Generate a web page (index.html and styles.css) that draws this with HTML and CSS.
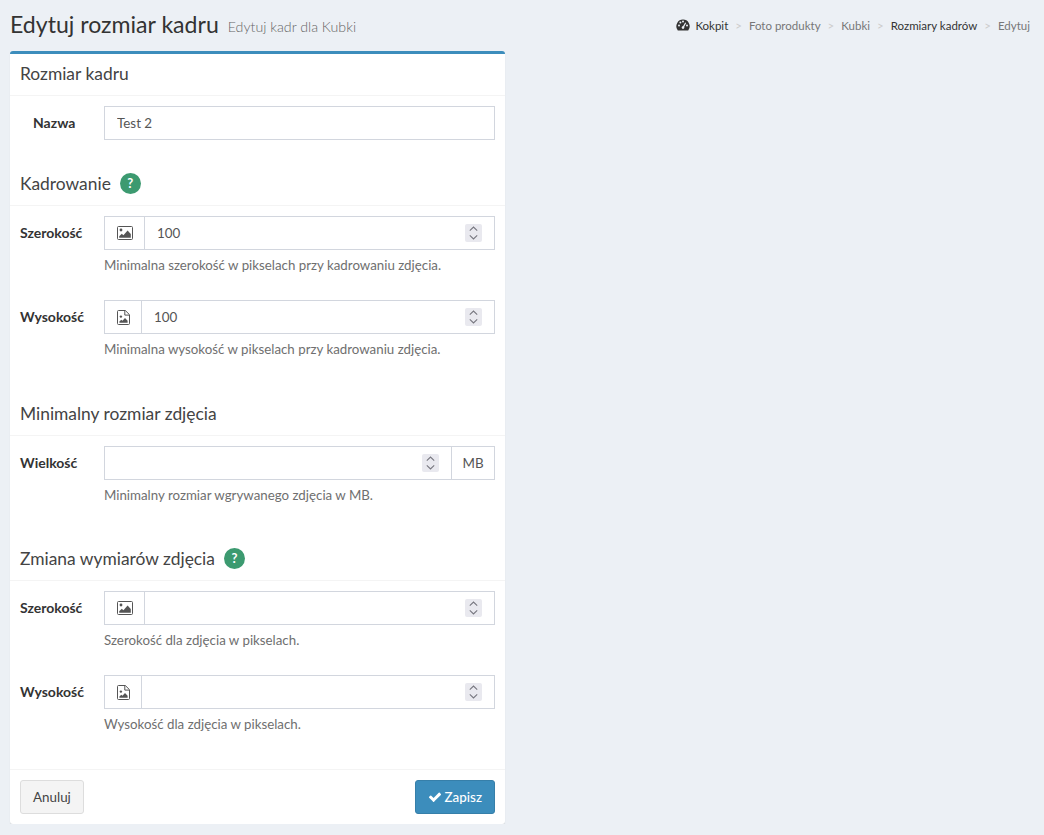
FILE: index.html
```html
<!DOCTYPE html>
<html lang="pl">
<head>
  <meta charset="UTF-8" />
  <title>Edytuj rozmiar kadru</title>
  <link rel="stylesheet" href="styles.css">
</head>
<body>
<svg class="sprites" width="0" height="0">
  <symbol id="i-picture" viewBox="0 0 16 14">
    <rect x="0.5" y="0.5" width="15" height="13" rx="1" fill="none" stroke="currentColor" stroke-width="1"/>
    <circle cx="4" cy="4" r="1.4" fill="currentColor"/>
    <path d="M2.2 11.8v-1.6l2.6-2.4 1.6 1.4 4.2-4.6 3.2 3.4v3.8z" fill="currentColor"/>
  </symbol>
  <symbol id="i-file" viewBox="0 0 13 15">
    <path d="M1.5.5h6.8l4.2 4.2v8.8a1 1 0 0 1-1 1h-10a1 1 0 0 1-1-1v-12a1 1 0 0 1 1-1z" fill="none" stroke="currentColor" stroke-width="1"/>
    <path d="M7.8.7v4.4h4.4" fill="none" stroke="currentColor" stroke-width="1"/>
    <circle cx="3.9" cy="6.6" r="1.2" fill="currentColor"/>
    <path d="M2.4 12.8v-1.4l1.9-1.7 1.2 1.1 2.5-2.7 2.6 2.7v2z" fill="currentColor"/>
  </symbol>
  <symbol id="i-spin" viewBox="0 0 17 18">
    <path d="M4.8 6.6 8.5 3l3.7 3.6M4.8 11.4 8.5 15l3.7-3.6" fill="none" stroke="currentColor" stroke-width="1.1"/>
  </symbol>
</svg>

<div class="page-head">
  <h1>Edytuj rozmiar kadru <small>Edytuj kadr dla Kubki</small></h1>
  <ol class="breadcrumb">
    <li class="dark">
      <svg class="gauge" viewBox="0 0 14 12"><path d="M7 .6a6.6 6.6 0 0 0-5.7 10l.5.8h10.4l.5-.8A6.6 6.6 0 0 0 7 .6z" fill="currentColor"/><g fill="#ecf0f5"><circle cx="3" cy="6.4" r="1"/><circle cx="4.4" cy="3.4" r="1"/><circle cx="7" cy="2.4" r="1"/><circle cx="11" cy="6.4" r="1"/><circle cx="7" cy="8.6" r="1.3"/><path d="m6.4 8.2 2.8-4.8 1 .5-2.6 5z"/></g></svg>
      Kokpit
    </li>
    <li>Foto produkty</li>
    <li>Kubki</li>
    <li class="dark">Rozmiary kadrów</li>
    <li>Edytuj</li>
  </ol>
</div>

<form class="box">
  <div class="box-head"><h3>Rozmiar kadru</h3></div>
  <div class="box-body first">
    <div class="row">
      <label class="label-name">Nazwa</label>
      <div class="col"><input class="control" type="text" value="Test 2"></div>
    </div>
  </div>

  <div class="box-head">
    <h3>Kadrowanie</h3><span class="hint">?</span>
  </div>
  <div class="box-body">
    <div class="row">
      <label>Szerokość</label>
      <div class="col">
        <div class="group">
          <span class="addon"><svg class="ic-pic"><use href="#i-picture"/></svg></span>
          <input type="text" value="100">
          <svg class="spin"><use href="#i-spin"/></svg>
        </div>
        <p class="help">Minimalna szerokość w pikselach przy kadrowaniu zdjęcia.</p>
      </div>
    </div>
    <div class="row">
      <label>Wysokość</label>
      <div class="col">
        <div class="group">
          <span class="addon addon-file"><svg class="ic-file"><use href="#i-file"/></svg></span>
          <input type="text" value="100">
          <svg class="spin"><use href="#i-spin"/></svg>
        </div>
        <p class="help">Minimalna wysokość w pikselach przy kadrowaniu zdjęcia.</p>
      </div>
    </div>
  </div>

  <div class="box-head"><h3>Minimalny rozmiar zdjęcia</h3></div>
  <div class="box-body tight">
    <div class="row">
      <label>Wielkość</label>
      <div class="col">
        <div class="group">
          <input type="text">
          <svg class="spin"><use href="#i-spin"/></svg>
          <span class="addon addon-end">MB</span>
        </div>
        <p class="help">Minimalny rozmiar wgrywanego zdjęcia w MB.</p>
      </div>
    </div>
  </div>

  <div class="box-head">
    <h3>Zmiana wymiarów zdjęcia</h3><span class="hint">?</span>
  </div>
  <div class="box-body">
    <div class="row">
      <label>Szerokość</label>
      <div class="col">
        <div class="group">
          <span class="addon"><svg class="ic-pic"><use href="#i-picture"/></svg></span>
          <input type="text">
          <svg class="spin"><use href="#i-spin"/></svg>
        </div>
        <p class="help">Szerokość dla zdjęcia w pikselach.</p>
      </div>
    </div>
    <div class="row">
      <label>Wysokość</label>
      <div class="col">
        <div class="group">
          <span class="addon addon-file"><svg class="ic-file"><use href="#i-file"/></svg></span>
          <input type="text">
          <svg class="spin"><use href="#i-spin"/></svg>
        </div>
        <p class="help">Wysokość dla zdjęcia w pikselach.</p>
      </div>
    </div>
  </div>

  <div class="box-foot">
    <button type="button" class="btn">Anuluj</button>
    <button type="button" class="btn btn-primary">
      <svg class="check" viewBox="0 0 1792 1792"><path fill="currentColor" d="M1671 566q0 40-28 68l-724 724-136 136q-28 28-68 28t-68-28l-136-136-362-362q-28-28-28-68t28-68l136-136q28-28 68-28t68 28l294 295 656-657q28-28 68-28t68 28l136 136q28 28 28 68z"/></svg>
      Zapisz
    </button>
  </div>
</form>
</body>
</html>
```

FILE: styles.css
```css
* {
  box-sizing: border-box;
}

body {
  margin: 0;
  padding: 0 14px 0 10px;
  background: #ecf0f5;
  color: #333;
  font-family: Lato, "Noto Sans", sans-serif;
  font-size: 14px;
}

.sprites {
  display: block;
  height: 0;
}

.page-head {
  height: 51px;
  padding-bottom: 3px;
  display: flex;
  align-items: center;
  justify-content: space-between;
}

h1 {
  margin: 0;
  font-size: 23.1px;
  font-weight: 400;
  color: #333;
}

h1 small {
  margin-left: 3px;
  font-size: 14.2px;
  font-weight: 300;
  color: #666;
  vertical-align: 1px;
}

.breadcrumb {
  display: flex;
  align-items: center;
  margin: 2px 0 0;
  padding: 0;
  list-style: none;
  font-size: 11.5px;
  color: #777;
}

.breadcrumb li + li::before {
  content: ">";
  margin: 0 7px;
  color: #ccc;
}

.breadcrumb .dark {
  color: #333;
}

.gauge {
  width: 14px;
  height: 12px;
  margin-right: 2px;
  vertical-align: -1px;
}

.box {
  width: 495px;
  background: #fff;
  border-top: 3px solid #3c8dbc;
  border-radius: 3px;
  box-shadow: 0 1px 1px rgba(0, 0, 0, 0.12);
}

.box-head {
  height: 42px;
  padding: 0 10px 2px;
  display: flex;
  align-items: center;
  border-bottom: 1px solid #f4f4f4;
}

h3 {
  margin: 0;
  font-size: 17.4px;
  font-weight: 400;
  color: #444;
}

.hint {
  width: 21px;
  height: 21px;
  margin-left: 9px;
  border-radius: 50%;
  background: #3c9a70;
  color: #fff;
  font-size: 13px;
  font-weight: 700;
  line-height: 21px;
  text-align: center;
}

.box-body {
  padding: 10px;
}

.box-body.first {
  padding-bottom: 0;
}

.box-body.tight {
  padding-bottom: 9px;
}

.row {
  display: flex;
  margin-bottom: 24px;
}

.row label {
  width: 84px;
  flex: none;
  padding-top: 7px;
  line-height: 20px;
  font-weight: 700;
  color: #333;
}

.row .label-name {
  padding-left: 13px;
}

.col {
  flex: 1;
}

.control,
.group {
  width: 100%;
  height: 34px;
  border: 1px solid #d2d6de;
}

.control {
  display: block;
  padding: 0 12px;
  font: inherit;
  font-size: 13.4px;
  color: #555;
  outline: none;
}

.group {
  display: flex;
  align-items: center;
}

.group input {
  flex: 1;
  min-width: 0;
  height: 100%;
  padding: 0 12px;
  border: 0;
  outline: none;
  font: inherit;
  font-size: 13.4px;
  color: #555;
  background: transparent;
}

.addon {
  width: 40px;
  height: 100%;
  flex: none;
  display: flex;
  align-items: center;
  justify-content: center;
  border-right: 1px solid #d2d6de;
  color: #555;
}

.addon-file {
  width: 37px;
}

.addon-end {
  width: 43px;
  margin-left: 12px;
  border-right: 0;
  border-left: 1px solid #d2d6de;
  font-size: 13.4px;
}

.ic-pic {
  width: 16px;
  height: 14px;
}

.ic-file {
  width: 13px;
  height: 15px;
}

.spin {
  width: 17px;
  height: 18px;
  flex: none;
  margin-right: 12px;
  background: #e9e9ef;
  border-radius: 2px;
  color: #77777f;
}

.spin:has(+ .addon-end) {
  margin-right: 0;
}

.help {
  margin: 5px 0 1px;
  line-height: 20px;
  font-size: 13.3px;
  color: #6f6f6f;
}

.box-foot {
  display: flex;
  justify-content: space-between;
  padding: 10px;
  border-top: 1px solid #f4f4f4;
}

.btn {
  height: 34px;
  padding: 0 12px;
  border: 1px solid #ddd;
  border-radius: 3px;
  background: #f4f4f4;
  color: #444;
  font: inherit;
  font-size: 13.4px;
}

.btn-primary {
  display: flex;
  align-items: center;
  gap: 3px;
  border-color: #367fa9;
  background: #3c8dbc;
  color: #fff;
  font-weight: 500;
}

.check {
  width: 14px;
  height: 14px;
}
```
